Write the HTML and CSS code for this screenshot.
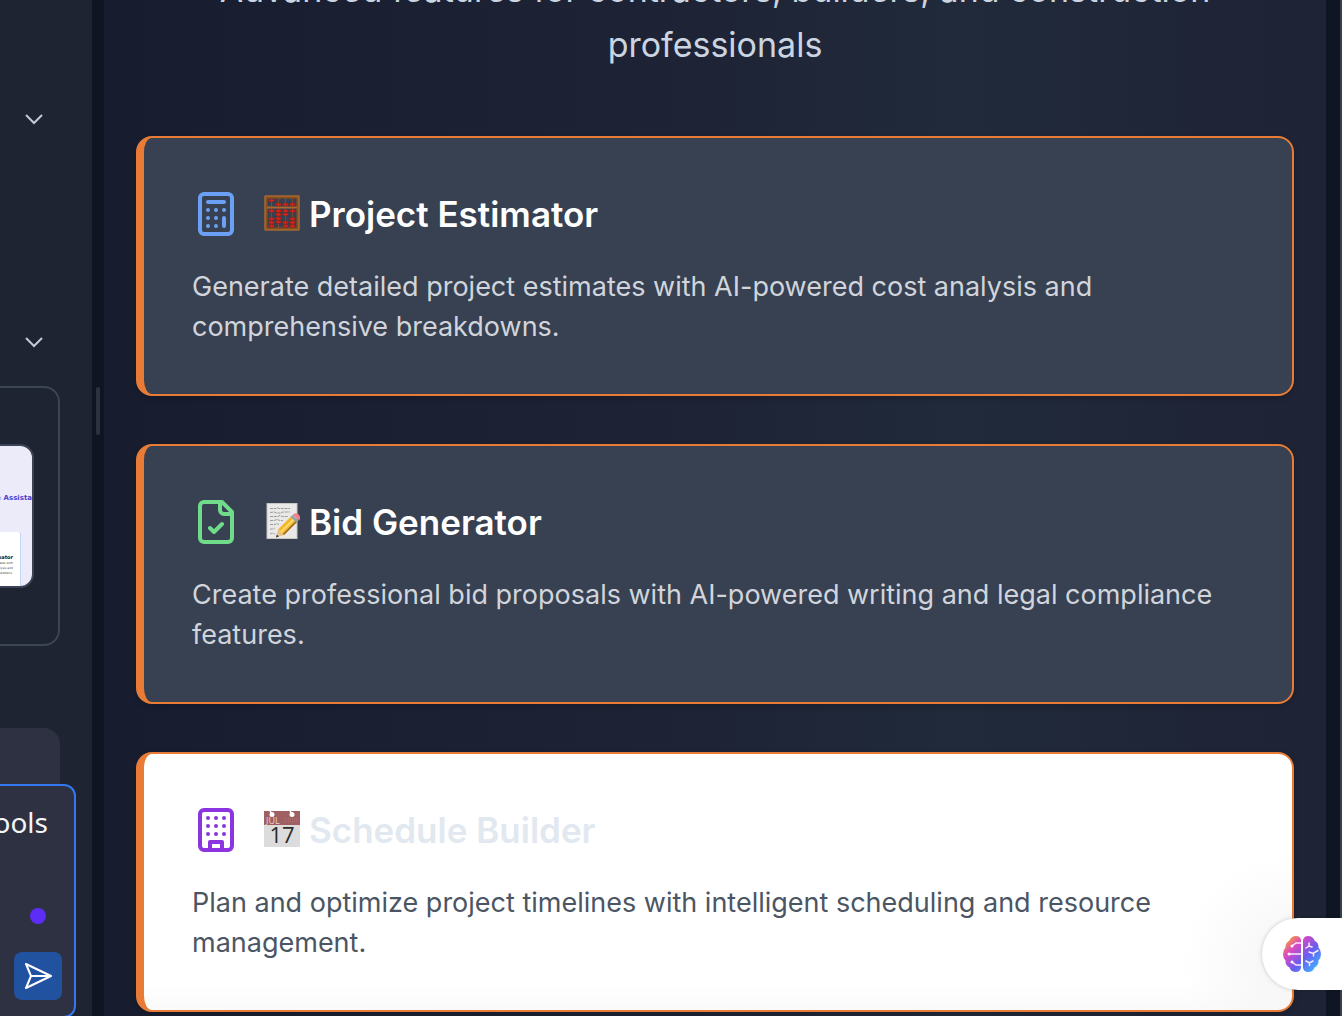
FILE: index.html
```html
<!DOCTYPE html>
<html lang="en">
<head>
<meta charset="utf-8">
<title>Construction tools</title>
<link rel="stylesheet" href="styles.css">
</head>
<body>
<div class="app">
  <aside class="sidebar">
    <button class="toggle toggle-first" aria-label="Collapse section"><svg viewBox="0 0 20 12"><path d="M2 2l8 8 8-8"/></svg></button>
    <button class="toggle toggle-second" aria-label="Collapse section"><svg viewBox="0 0 20 12"><path d="M2 2l8 8 8-8"/></svg></button>
    <section class="preview">
      <div class="thumb">
        <p class="thumb-title"><span>on</span> Assista</p>
        <div class="thumb-card">
          <b>Estimator</b>
          <small>estimates with</small>
          <small>analysis and</small>
          <small>breakdowns.</small>
        </div>
      </div>
    </section>
    <div class="message"></div>
    <form class="composer">
      <span class="composer-label">Tools</span>
      <span class="status"></span>
      <button class="send" type="button" aria-label="Send"><svg viewBox="0 0 28 28"><path d="M2 2l25 12L2 26l5-12zM7 14h20"/></svg></button>
    </form>
  </aside>
  <div class="splitter"><span class="grip"></span></div>
  <main class="content">
    <p class="lead">Advanced features for contractors, builders, and construction professionals</p>
    <div class="cards">
      <article class="card">
        <header class="card-head">
          <svg class="icon blue" viewBox="0 0 24 24"><rect x="4" y="2" width="16" height="20" rx="2"/><path d="M8 6h8M16 14v4M16 10h.01M12 10h.01M8 10h.01M12 14h.01M8 14h.01M12 18h.01M8 18h.01"/></svg>
          <h2><svg class="emoji" viewBox="0 0 36 36">
            <path d="M7.500 3v30M14.500 3v30M21.500 3v30M28.500 3v30" stroke="#7a4a3c" stroke-width="1"/>
            <rect x="2" y="2" width="32" height="32" fill="none" stroke="#8a4f1b" stroke-width="3"/>
            <path d="M1 1h34v34H1z" fill="none" stroke="#b5763a"/>
            <path d="M3 12.500h30" stroke="#a8682b" stroke-width="2"/>
            <g fill="#d3261a" stroke="#7c1610" stroke-width=".4">
              <ellipse cx="7.500" cy="5.500" rx="2.900" ry="1.400"/><ellipse cx="14.500" cy="9.500" rx="2.900" ry="1.400"/><ellipse cx="21.500" cy="9.500" rx="2.900" ry="1.400"/><ellipse cx="28.500" cy="9.500" rx="2.900" ry="1.400"/>
              <ellipse cx="7.500" cy="16" rx="2.900" ry="1.400"/><ellipse cx="14.500" cy="16" rx="2.900" ry="1.400"/><ellipse cx="21.500" cy="16" rx="2.900" ry="1.400"/><ellipse cx="28.500" cy="16" rx="2.900" ry="1.400"/>
              <ellipse cx="14.500" cy="19.500" rx="2.900" ry="1.400"/><ellipse cx="21.500" cy="19.500" rx="2.900" ry="1.400"/>
              <ellipse cx="7.500" cy="24" rx="2.900" ry="1.400"/><ellipse cx="14.500" cy="23.500" rx="2.900" ry="1.400"/><ellipse cx="28.500" cy="24" rx="2.900" ry="1.400"/>
              <ellipse cx="7.500" cy="27.500" rx="2.900" ry="1.400"/><ellipse cx="14.500" cy="27" rx="2.900" ry="1.400"/><ellipse cx="21.500" cy="27.500" rx="2.900" ry="1.400"/><ellipse cx="28.500" cy="27.500" rx="2.900" ry="1.400"/>
              <ellipse cx="7.500" cy="31" rx="2.900" ry="1.400"/><ellipse cx="21.500" cy="31" rx="2.900" ry="1.400"/><ellipse cx="28.500" cy="31" rx="2.900" ry="1.400"/>
            </g></svg>Project Estimator</h2>
        </header>
        <p>Generate detailed project estimates with AI-powered cost analysis and comprehensive breakdowns.</p>
      </article>
      <article class="card">
        <header class="card-head">
          <svg class="icon green" viewBox="0 0 24 24"><path d="M15 2H6a2 2 0 0 0-2 2v16a2 2 0 0 0 2 2h12a2 2 0 0 0 2-2V7Z"/><path d="M14 2v4a2 2 0 0 0 2 2h4M9 15l2 2 4-4"/></svg>
          <h2><svg class="emoji" viewBox="0 0 36 36">
            <rect x="3" y=".5" width="30" height="35" fill="#e9e9e7" stroke="#c6c6c4"/>
            <path d="M6 5.500h6l1-1 2 1h11M6 9.500l4-.5 3 1h4l2-1h7M6 13.500h8l2-1 2 1h6M6 17.500h4l3-1 3 1h3M6 21.500h5l2-1 2 1M6 26h3l2-1M6 31l2-1 3 1" fill="none" stroke="#888" stroke-width=".8" stroke-dasharray="3 .8"/>
            <path d="M12 34.500l2-8 6 5.500z" fill="#e8c28c"/><path d="M12 34.500l.8-3 2 2z" fill="#333"/>
            <path d="M14 26.500l13-13 6 5.500-13 13z" fill="#f4b62c"/><path d="M16 28.500l13-13 1.500 1.500-13 13z" fill="#ffdc6a"/><path d="M18.800 31l13-13 1.200 1-13 13z" fill="#9a6b23"/>
            <path d="M26.500 14l2-2 6 5.500-2 2z" fill="#91a4ad"/><path d="M28.500 12q3-3 6-.5t.5 6z" fill="#ee8189"/></svg>Bid Generator</h2>
        </header>
        <p>Create professional bid proposals with AI-powered writing and legal compliance features.</p>
      </article>
      <article class="card card-light">
        <header class="card-head">
          <svg class="icon purple" viewBox="0 0 24 24"><rect x="4" y="2" width="16" height="20" rx="2"/><path d="M9 22v-4h6v4M8 6h.01M16 6h.01M12 6h.01M12 10h.01M12 14h.01M16 10h.01M16 14h.01M8 10h.01M8 14h.01"/></svg>
          <h2><svg class="emoji" viewBox="0 0 36 36">
            <path d="M0 0h36v36H0z" fill="#dcdcdc"/><path d="M0 0h36v14H0z" fill="#a06062"/>
            <circle cx="8" cy="3.500" r="2.500" fill="#fff"/><circle cx="28" cy="3.500" r="2.500" fill="#fff"/><path d="M6 0l2 3M26 0l2 3" stroke="#fff" stroke-width="1.500"/>
            <path d="M20 8h14M20 10.500h14" stroke="#b07577" stroke-dasharray="1 1"/>
            <text x="2" y="12.500" class="cal-month">JUL</text><text x="18" y="32" class="cal-day">17</text></svg>Schedule Builder</h2>
        </header>
        <p>Plan and optimize project timelines with intelligent scheduling and resource management.</p>
      </article>
    </div>
  </main>
  <div class="scroll-track"></div>
  <button class="assistant" aria-label="Open assistant">
    <svg viewBox="0 0 38 36">
      <defs><linearGradient id="brain" gradientUnits="userSpaceOnUse" x1="4" y1="3" x2="34" y2="33"><stop offset="0" stop-color="#f5a033"/><stop offset=".25" stop-color="#dd49c0"/><stop offset=".6" stop-color="#6b5cf0"/><stop offset="1" stop-color="#3db2ff"/></linearGradient></defs>
      <path fill="url(#brain)" d="M18 4v28q-1 4-5 4-5 0-6.500-4.500Q2 29 2.500 24.500 0 22 0 18t2.500-6.500Q2 7 6.500 4.500 8 0 13 0q4 0 5 4zM20 4q1-4 5-4 5 0 6.500 4.500Q36 7 35.500 11.500 38 14 38 18t-2.500 6.500Q36 29 31.500 31.500 30 36 25 36q-4 0-5-4z"/>
      <g fill="none" stroke="#fbe9ff" stroke-width="1.500" stroke-linecap="round"><path d="M9 10l4-3h5M6 18h12M9 26l4 3h5M26 7v3l-3 2M26 10l3 1M26 16l4 1.500 5-3M30.500 17.500V20M23 25l3.500 2 3.500-2M26.500 27v2.500"/></g>
      <g fill="#fff"><circle cx="9" cy="10" r="1.500"/><circle cx="6" cy="18" r="1.500"/><circle cx="9" cy="26" r="1.500"/></g>
    </svg>
  </button>
</div>
</body>
</html>
```

FILE: styles.css
```css
* { box-sizing: border-box; }
body { margin: 0; background: #0f1523; font-family: Inter, "Liberation Sans", sans-serif; }
p, h2 { margin: 0; }
button { border: 0; padding: 0; background: none; cursor: pointer; }
svg { display: block; }
.app { position: relative; display: flex; height: 100vh; overflow: hidden; }

.sidebar { position: relative; flex: none; display: flex; flex-direction: column; align-items: flex-end; width: 92px; padding-right: 32px; background: #1f2433; }
.toggle { width: 20px; height: 12px; margin-right: 16px; }
.toggle-first { margin-top: 113px; }
.toggle-second { margin-top: 211px; }
.toggle svg { width: 20px; height: 12px; fill: none; stroke: #c5c9d1; stroke-width: 2; }
.preview { width: 120px; height: 260px; margin-top: 38px; padding: 56px 24px; border: 2px solid #3a474f; border-radius: 16px; }
.thumb { display: flex; flex-direction: column; align-items: flex-end; height: 144px; overflow: hidden; border: 2px solid #3d4357; border-radius: 14px; background: #ebebfa; }
.thumb-title { padding-top: 47px; font: 700 7px/10px "DejaVu Sans", sans-serif; color: #4b3fd1; white-space: nowrap; }
.thumb-title span { color: #a9b5f2; }
.thumb-card { flex: 1; width: 60px; margin: 29px 11px 0 0; padding: 22px 7px 0 0; border-right: 1px solid #c3d4f5; border-radius: 3px 3px 0 0; background: #fff; text-align: right; }
.thumb-card b { display: block; font: 700 5px/7px "DejaVu Sans", sans-serif; color: #111; }
.thumb-card small { display: block; font: 3px/5px "DejaVu Sans", sans-serif; color: #444; white-space: nowrap; }
.message { width: 120px; height: 120px; margin-top: 82px; border-radius: 16px; background: #2d3142; }
.composer { position: absolute; right: 16px; bottom: -2px; display: flex; flex-direction: column; align-items: flex-end; width: 160px; height: 234px; padding: 18px 12px 16px; border: 2px solid #3478f0; border-radius: 12px; background: #2d3142; }
.composer-label { margin-right: 14px; font: 28px/36px "Noto Sans", sans-serif; color: #f4f5f7; }
.status { width: 16px; height: 16px; margin: 68px 16px 28px; border-radius: 50%; background: #5b2df5; }
.send { display: grid; place-items: center; width: 48px; height: 48px; border-radius: 8px; background: #2152a0; }
.send svg { width: 28px; height: 28px; fill: none; stroke: #fff; stroke-width: 2; stroke-linejoin: round; }

.splitter { flex: none; width: 12px; padding: 387px 4px 0; background: #0f1523; }
.grip { display: block; width: 4px; height: 48px; border-radius: 2px; background: #2d3142; }

.content { flex: 1; min-width: 0; padding: 0 32px; overflow: hidden; background: linear-gradient(90deg, #171d2f 0%, #1a2032 20%, #1e2436 50%, #202a3a 70%, #1f2537 90%, #1e2436 100%); }
.lead { max-width: 1080px; margin: -38px auto 64px; font-size: 34px; line-height: 55px; text-align: center; color: #cbd5e1; }
.cards { display: flex; flex-direction: column; gap: 48px; }
.card { padding: 48px 48px 47px; border: 2px solid #e87b35; border-left-width: 8px; border-radius: 16px; background: #374152; box-shadow: 0 2px 6px rgba(0, 0, 0, .2); }
.card-head { display: flex; align-items: center; gap: 24px; height: 56px; margin-bottom: 25px; }
.card h2 { display: flex; align-items: center; gap: 9px; font-size: 35px; line-height: 56px; font-weight: 600; color: #fff; }
.card p { font-size: 27px; line-height: 40px; color: #d1d5db; }
.icon { width: 48px; height: 48px; fill: none; stroke: currentColor; stroke-width: 2; stroke-linecap: round; stroke-linejoin: round; }
.blue { color: #6ba1f5; }
.green { color: #70dc8a; }
.purple { color: #8a35df; }
.emoji { width: 36px; height: 36px; margin-bottom: 2px; }
.cal-month { font: 9px "Open Sans", sans-serif; fill: #e5d5d5; }
.cal-day { font: 22px "Open Sans", sans-serif; text-anchor: middle; fill: #2b2b2b; }
.card-light { background: radial-gradient(circle at 100% 82%, #f5f5f5, rgba(255, 255, 255, 0) 110px), linear-gradient(#fff 90%, #fafafa); }
.card-light h2 { color: #e2e8f0; }
.card-light p { color: #4b5563; }

.scroll-track { flex: none; width: 16px; border-right: 2px solid #3a3f4c; background: #0f1523; }
.assistant { position: absolute; right: 0; bottom: 26px; width: 80px; height: 72px; padding-left: 21px; border-radius: 36px 0 0 36px; background: #fff; box-shadow: 0 0 4px rgba(0, 0, 0, .2); }
.assistant svg { width: 38px; height: 36px; }
```
